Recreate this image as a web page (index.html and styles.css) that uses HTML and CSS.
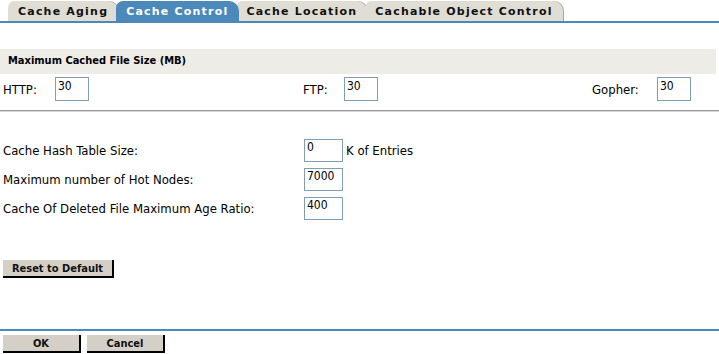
FILE: index.html
```html
<!DOCTYPE html>
<html lang="en">
<head>
    <meta charset="UTF-8">
    <title>Cache Control</title>
    <link rel="stylesheet" href="styles.css">
</head>
<body>
    <!-- Tab strip -->
    <div class="tabs">
        <div class="tab">Cache Aging</div>
        <div class="tab active">Cache Control</div>
        <div class="tab">Cache Location</div>
        <div class="tab">Cachable Object Control</div>
    </div>

    <!-- File size section -->
    <div class="section-head">Maximum Cached File Size (MB)</div>
    <div class="size-row">
        <div class="cell cell-http"><label>HTTP:</label><input type="text" class="box" value="30"></div>
        <div class="cell cell-ftp"><label>FTP:</label><input type="text" class="box" value="30"></div>
        <div class="cell cell-gopher"><label>Gopher:</label><input type="text" class="box" value="30"></div>
    </div>
    <div class="rule"></div>

    <!-- Cache settings -->
    <div class="settings">
        <label>Cache Hash Table Size:</label>
        <div class="field"><input type="text" class="box wide" value="0"><span class="unit">K of Entries</span></div>
        <label>Maximum number of Hot Nodes:</label>
        <div class="field"><input type="text" class="box wide" value="7000"></div>
        <label>Cache Of Deleted File Maximum Age Ratio:</label>
        <div class="field"><input type="text" class="box wide" value="400"></div>
    </div>

    <button class="btn reset">Reset to Default</button>

    <!-- Footer -->
    <div class="footer">
        <button class="btn ok">OK</button>
        <button class="btn cancel">Cancel</button>
    </div>
</body>
</html>
```

FILE: styles.css
```css
/* Global */
body {
    margin: 0;
    font-family: "DejaVu Sans Condensed", "DejaVu Sans", sans-serif;
    font-size: 13px;
    color: #000;
    background: #fff;
}

/* Tabs */
.tabs {
    display: flex;
    height: 21px;
    padding-left: 8px;
    border-bottom: 2px solid #4a89b9;
}

.tab {
    height: 20px;
    margin-top: 1px;
    margin-right: -3px;
    padding: 0 11px 0 10px;
    line-height: 21px;
    font-family: "DejaVu Sans", sans-serif;
    font-size: 11px;
    font-weight: bold;
    letter-spacing: 1.2px;
    color: #111;
    background: #e0ddd5;
    border-radius: 7px 10px 0 0;
    box-shadow: inset -1px 0 0 #a9a59c;
}

.tab.active {
    position: relative;
    z-index: 1;
    background: #4a89b9;
    color: #fff;
    box-shadow: none;
}

/* Section header */
.section-head {
    margin-top: 26px;
    width: 708px;
    height: 25px;
    padding-left: 8px;
    line-height: 24px;
    font-size: 11px;
    font-weight: bold;
    background: #eeece7;
}

.size-row {
    display: flex;
    margin-top: 3px;
    height: 24px;
}

.cell {
    display: flex;
    align-items: center;
}

.cell-http { width: 300px; padding-left: 3px; }
.cell-http label { width: 52px; }
.cell-ftp { width: 289px; }
.cell-ftp label { width: 41px; }
.cell-gopher label { width: 65px; }

.box {
    box-sizing: border-box;
    width: 34px;
    height: 24px;
    margin: 0;
    padding: 0 2px 7px;
    border: 1px solid #7f9db9;
    font-family: inherit;
    font-size: 12px;
    color: #000;
}

.box.wide {
    width: 39px;
    height: 23px;
}

.rule {
    margin-top: 9px;
    border-top: 1px solid #9c9c9c;
    border-bottom: 1px solid #d6d6d6;
}

/* Settings grid */
.settings {
    display: grid;
    grid-template-columns: 301px auto;
    row-gap: 6px;
    align-items: center;
    margin-top: 27px;
    padding-left: 3px;
}

.field {
    display: flex;
    align-items: center;
}

.unit {
    margin-left: 3px;
}

/* Buttons */
.btn {
    height: 18px;
    padding: 0;
    font-family: inherit;
    font-size: 11px;
    font-weight: bold;
    color: #111;
    background: #d4d0c8;
    border: none;
    border-right: 2px solid #000;
    border-bottom: 2px solid #000;
    cursor: pointer;
}

.reset {
    display: block;
    width: 111px;
    margin: 40px 0 0 3px;
}

.footer {
    display: flex;
    gap: 6px;
    margin-top: 51px;
    padding-top: 4px;
    padding-left: 3px;
    border-top: 2px solid #4a89b9;
}

.ok,
.cancel {
    width: 78px;
}
```
